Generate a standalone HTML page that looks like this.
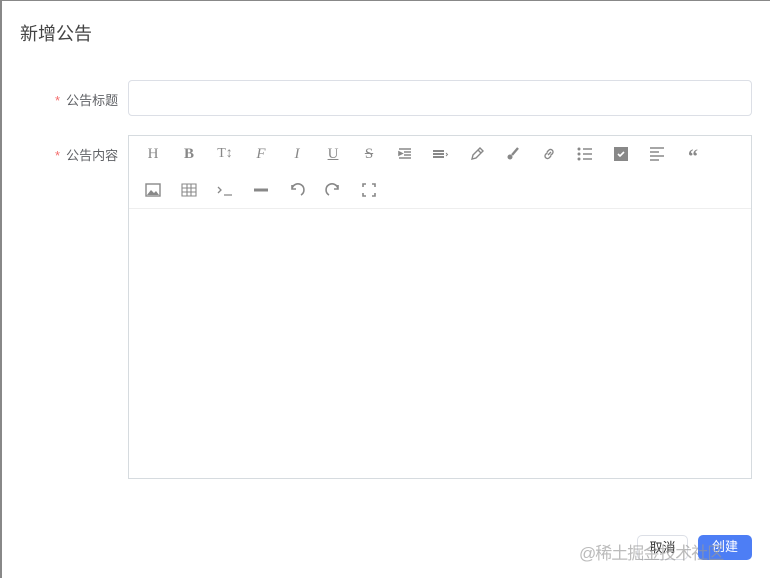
<!DOCTYPE html>
<html><head><meta charset="utf-8"><style>
*{margin:0;padding:0;box-sizing:border-box}
body{width:770px;height:578px;background:#fff;position:relative;overflow:hidden;font-family:"Liberation Sans","Noto Sans CJK SC",sans-serif;color:#606266}
.bt{position:absolute;left:0;top:0;width:770px;height:1px;background:#888}
.bl{position:absolute;left:0;top:0;width:2px;height:578px;background:#888}
.title{position:absolute;left:20px;top:20px;font-size:18px;color:#444}
.lab{position:absolute;font-size:13px;color:#606266}
.lab b{color:#f56c6c;font-weight:normal;margin-right:6px}
.inp{position:absolute;left:128px;top:80px;width:624px;height:36px;border:1px solid #dcdfe6;border-radius:4px}
.ed{position:absolute;left:128px;top:135px;width:624px;height:344px;border:1px solid #d6dbdf}
.tb{position:absolute;left:0;top:0;width:622px;height:73px;border-bottom:1px solid #eee}
.ic{position:absolute;width:20px;height:20px;color:#888;font-size:15px;text-align:center;line-height:20px;font-family:"Liberation Serif",serif}
.btn{position:absolute;top:535px;height:25px;border-radius:5px;font-size:13px;text-align:center;line-height:24px}
.wm{position:absolute;left:579px;top:539px;font-size:17px;color:rgba(150,150,150,.65);white-space:nowrap;letter-spacing:-1px;z-index:2}
</style></head><body>
<div class="bt"></div><div class="bl"></div>
<div class="title">新增公告</div>
<div class="lab" style="left:55px;top:90px"><b>*</b>公告标题</div>
<div class="inp"></div>
<div class="lab" style="left:55px;top:145px"><b>*</b>公告内容</div>
<div class="ed"><div class="tb">
<div class="ic" style="left:14px;top:8px">H</div>
<div class="ic" style="left:50px;top:8px;font-weight:bold">B</div>
<div class="ic" style="left:86px;top:8px;font-size:14px">T↕</div>
<div class="ic" style="left:122px;top:8px;font-style:italic">F</div>
<div class="ic" style="left:158px;top:8px;font-style:italic">I</div>
<div class="ic" style="left:194px;top:8px;text-decoration:underline">U</div>
<div class="ic" style="left:230px;top:8px;text-decoration:line-through">S</div>
<svg class="ic" style="left:266px;top:8px" viewBox="0 0 20 20"><path d="M4 5h12M9 8h7M9 11h7M4 14h12M4 8l3 1.5L4 11z" stroke="#888" stroke-width="1.6" fill="#888"/></svg>
<svg class="ic" style="left:302px;top:8px" viewBox="0 0 20 20"><path d="M2 7h11M2 10h11M2 13h11" stroke="#888" stroke-width="2"/><path d="M15 9l1.5 1.5L15 12" stroke="#888" fill="none"/></svg>
<svg class="ic" style="left:338px;top:8px" viewBox="0 0 20 20"><path d="M5 15l1-4 7-7 3 3-7 7zM11 6l3 3" stroke="#888" stroke-width="1.4" fill="none"/></svg>
<svg class="ic" style="left:374px;top:8px" viewBox="0 0 20 20"><path d="M15 4l-6 7" stroke="#888" stroke-width="2.4"/><circle cx="7" cy="13" r="2.5" fill="#888"/></svg>
<svg class="ic" style="left:410px;top:8px" viewBox="0 0 20 20"><path d="M9 11l3-3M8 8l2-2a2.5 2.5 0 013.5 3.5l-2 2M12 12l-2 2a2.5 2.5 0 01-3.5-3.5l2-2" stroke="#888" stroke-width="1.4" fill="none"/></svg>
<svg class="ic" style="left:446px;top:8px" viewBox="0 0 20 20"><circle cx="4" cy="5" r="1.5" fill="#888"/><circle cx="4" cy="10" r="1.5" fill="#888"/><circle cx="4" cy="15" r="1.5" fill="#888"/><path d="M8 5h9M8 10h9M8 15h9" stroke="#888" stroke-width="1.5"/></svg>
<svg class="ic" style="left:482px;top:8px" viewBox="0 0 20 20"><rect x="3" y="3" width="14" height="14" fill="#888"/><path d="M7 10l2 2 4-4" stroke="#fff" stroke-width="1.6" fill="none"/></svg>
<svg class="ic" style="left:518px;top:8px" viewBox="0 0 20 20"><path d="M3 4h14M3 8h9M3 12h14M3 16h9" stroke="#888" stroke-width="1.6"/></svg>
<div class="ic" style="left:554px;top:8px;font-weight:bold;font-size:20px;line-height:26px">“</div>
<svg class="ic" style="left:14px;top:44px" viewBox="0 0 20 20"><rect x="3" y="4" width="14" height="12" stroke="#888" stroke-width="1.4" fill="none"/><path d="M4 15l4-5 3 3 2-2 3 4z" fill="#888"/></svg>
<svg class="ic" style="left:50px;top:44px" viewBox="0 0 20 20"><path d="M3 4h14v12H3zM3 8h14M3 12h14M8 4v12M12 4v12" stroke="#888" stroke-width="1.1" fill="none"/></svg>
<svg class="ic" style="left:86px;top:44px" viewBox="0 0 20 20"><path d="M3 7l3 3-3 3M9 15h8" stroke="#888" stroke-width="1.3" fill="none"/></svg>
<svg class="ic" style="left:122px;top:44px" viewBox="0 0 20 20"><path d="M3 10h14" stroke="#888" stroke-width="3"/></svg>
<svg class="ic" style="left:158px;top:44px" viewBox="0 0 20 20"><path d="M5 5v4h4M5 9a6 6 0 119 6" stroke="#888" stroke-width="1.6" fill="none"/></svg>
<svg class="ic" style="left:194px;top:44px" viewBox="0 0 20 20"><path d="M15 5v4h-4M15 9a6 6 0 10-9 6" stroke="#888" stroke-width="1.6" fill="none"/></svg>
<svg class="ic" style="left:230px;top:44px" viewBox="0 0 20 20"><path d="M4 7V4h3M13 4h3v3M16 13v3h-3M7 16H4v-3" stroke="#888" stroke-width="1.6" fill="none"/></svg>
</div></div>
<div class="btn" style="left:637px;width:51px;border:1px solid #dcdfe6;color:#333">取消</div>
<div class="btn" style="left:698px;width:54px;background:#4d7ef5;color:#fff">创建</div>
<div class="wm">@稀土掘金技术社区</div>
</body></html>
